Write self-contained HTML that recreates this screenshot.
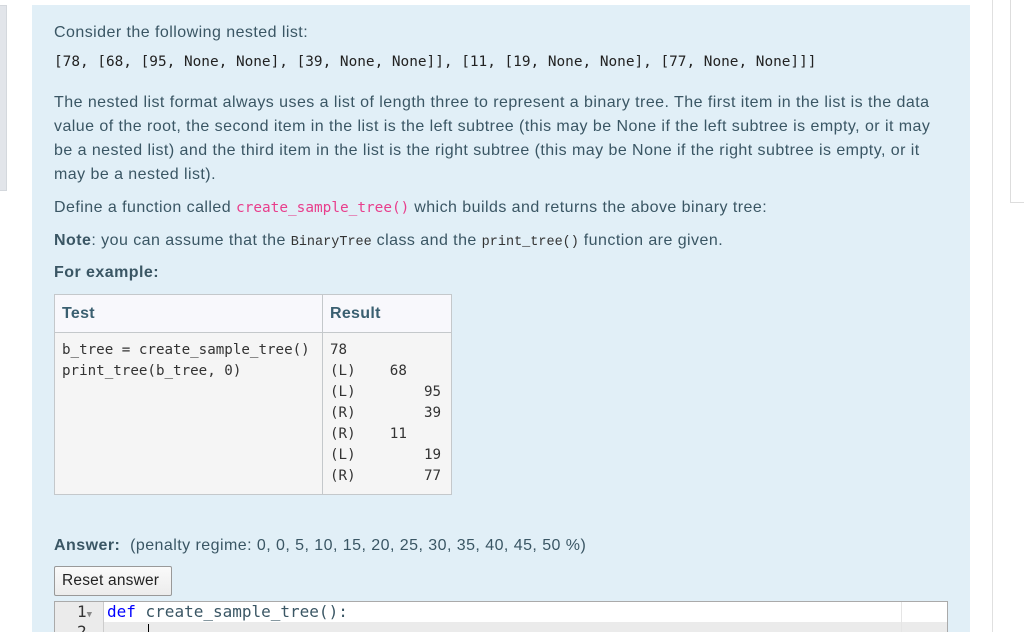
<!DOCTYPE html>
<html><head><meta charset="utf-8"><style>
*{margin:0;padding:0;box-sizing:border-box}
html,body{width:1024px;height:632px;overflow:hidden}
body{background:#fff;font-family:"Liberation Sans",sans-serif;color:#3a5664;position:relative}
.lbox{position:absolute;left:0;top:5px;width:7px;height:186px;background:#e2e5ea;border:1px solid #d4d8dd;border-left:none}
.vline{position:absolute;left:992px;top:0;width:1px;height:632px;background:#e0e0e0}
.rbox{position:absolute;left:1010px;top:-2px;width:20px;height:205px;border:1px solid #ddd}
.panel{position:absolute;left:32px;top:5px;width:938px;height:640px;background:#e1eff7}
.t{position:absolute;left:54px;font-size:16px;letter-spacing:0.45px;line-height:24px;white-space:nowrap}
.mono{font-family:"DejaVu Sans Mono","Liberation Mono",monospace;letter-spacing:0}
.code{color:#e83e8c;font-family:"DejaVu Sans Mono",monospace;font-size:14.4px;letter-spacing:0}
.small{font-family:"Liberation Mono",monospace;font-size:13.5px;color:#333;letter-spacing:0}
table{position:absolute;left:54px;top:294px;border-collapse:collapse;font-size:16px;letter-spacing:0.3px}
td,th{border:1px solid #c4c8cb;vertical-align:top;text-align:left}
th{background:#f8f8fc;height:38px;padding:0 7px;font-weight:bold;color:#3a5f70;vertical-align:middle}
td{background:#f5f5f5;height:161px;padding:7px 7px;font-family:"DejaVu Sans Mono",monospace;font-size:14.2px;letter-spacing:0;line-height:21px;color:#333;white-space:pre}
.btn{position:absolute;left:54px;top:566px;width:118px;height:30px;border:1px solid #999;border-radius:2px;background:linear-gradient(#fafafa,#ececec);font-size:15.5px;letter-spacing:0.2px;color:#222;line-height:28px;padding-left:7px;white-space:nowrap}
.ed{position:absolute;left:54px;top:601px;width:894px;height:40px;border:1px solid #aaa;background:#fff}
.gut{position:absolute;left:0;top:0;width:49px;height:40px;background:#ebebeb;border-right:1px solid #ccc}
.l2{position:absolute;left:49px;top:20px;width:843px;height:20px;background:#ebebeb}
.ed .txt{position:absolute;font-family:"DejaVu Sans Mono",monospace;font-size:16px;line-height:20px;top:0}
</style></head><body>
<div class="lbox"></div><div class="vline"></div><div class="rbox"></div>
<div class="panel"></div>
<div class="t" style="top:21px">Consider the following nested list:</div>
<div class="t mono" style="top:50px;font-size:14.4px;color:#222">[78, [68, [95, None, None], [39, None, None]], [11, [19, None, None], [77, None, None]]]</div>
<div class="t" style="top:91px">The nested list format always uses a list of length three to represent a binary tree. The first item in the list is the data<br>value of the root, the second item in the list is the left subtree (this may be None if the left subtree is empty, or it may<br>be a nested list) and the third item in the list is the right subtree (this may be None if the right subtree is empty, or it<br>may be a nested list).</div>
<div class="t" style="top:196px">Define a function called <span class="code">create_sample_tree()</span> which builds and returns the above binary tree:</div>
<div class="t" style="top:229px"><b>Note</b>: you can assume that the <span class="small">BinaryTree</span> class and the <span class="small">print_tree()</span> function are given.</div>
<div class="t" style="top:261px;font-weight:bold">For example:</div>
<table><tr><th style="width:268px">Test</th><th style="width:129px">Result</th></tr>
<tr><td>b_tree = create_sample_tree()
print_tree(b_tree, 0)</td><td>78
(L)    68
(L)        95
(R)        39
(R)    11
(L)        19
(R)        77</td></tr></table>
<div class="t" style="top:534px"><b>Answer:</b>&nbsp; (penalty regime: 0, 0, 5, 10, 15, 20, 25, 30, 35, 40, 45, 50 %)</div>
<div class="btn">Reset answer</div>
<div class="ed"><div class="gut"></div><div class="l2"></div>
<div class="txt" style="left:22px;color:#333">1<span style="font-size:9px;color:#888">▼</span></div>
<div class="txt" style="left:22px;top:20px;color:#333">2</div>
<div class="txt" style="left:52px"><span style="color:#00f">def</span> create_sample_tree():</div>
<div style="position:absolute;left:93px;top:22px;width:1px;height:18px;background:#000"></div>
<div style="position:absolute;left:846px;top:0;width:1px;height:40px;background:#e5e5e5"></div>
</div>
</body></html>
